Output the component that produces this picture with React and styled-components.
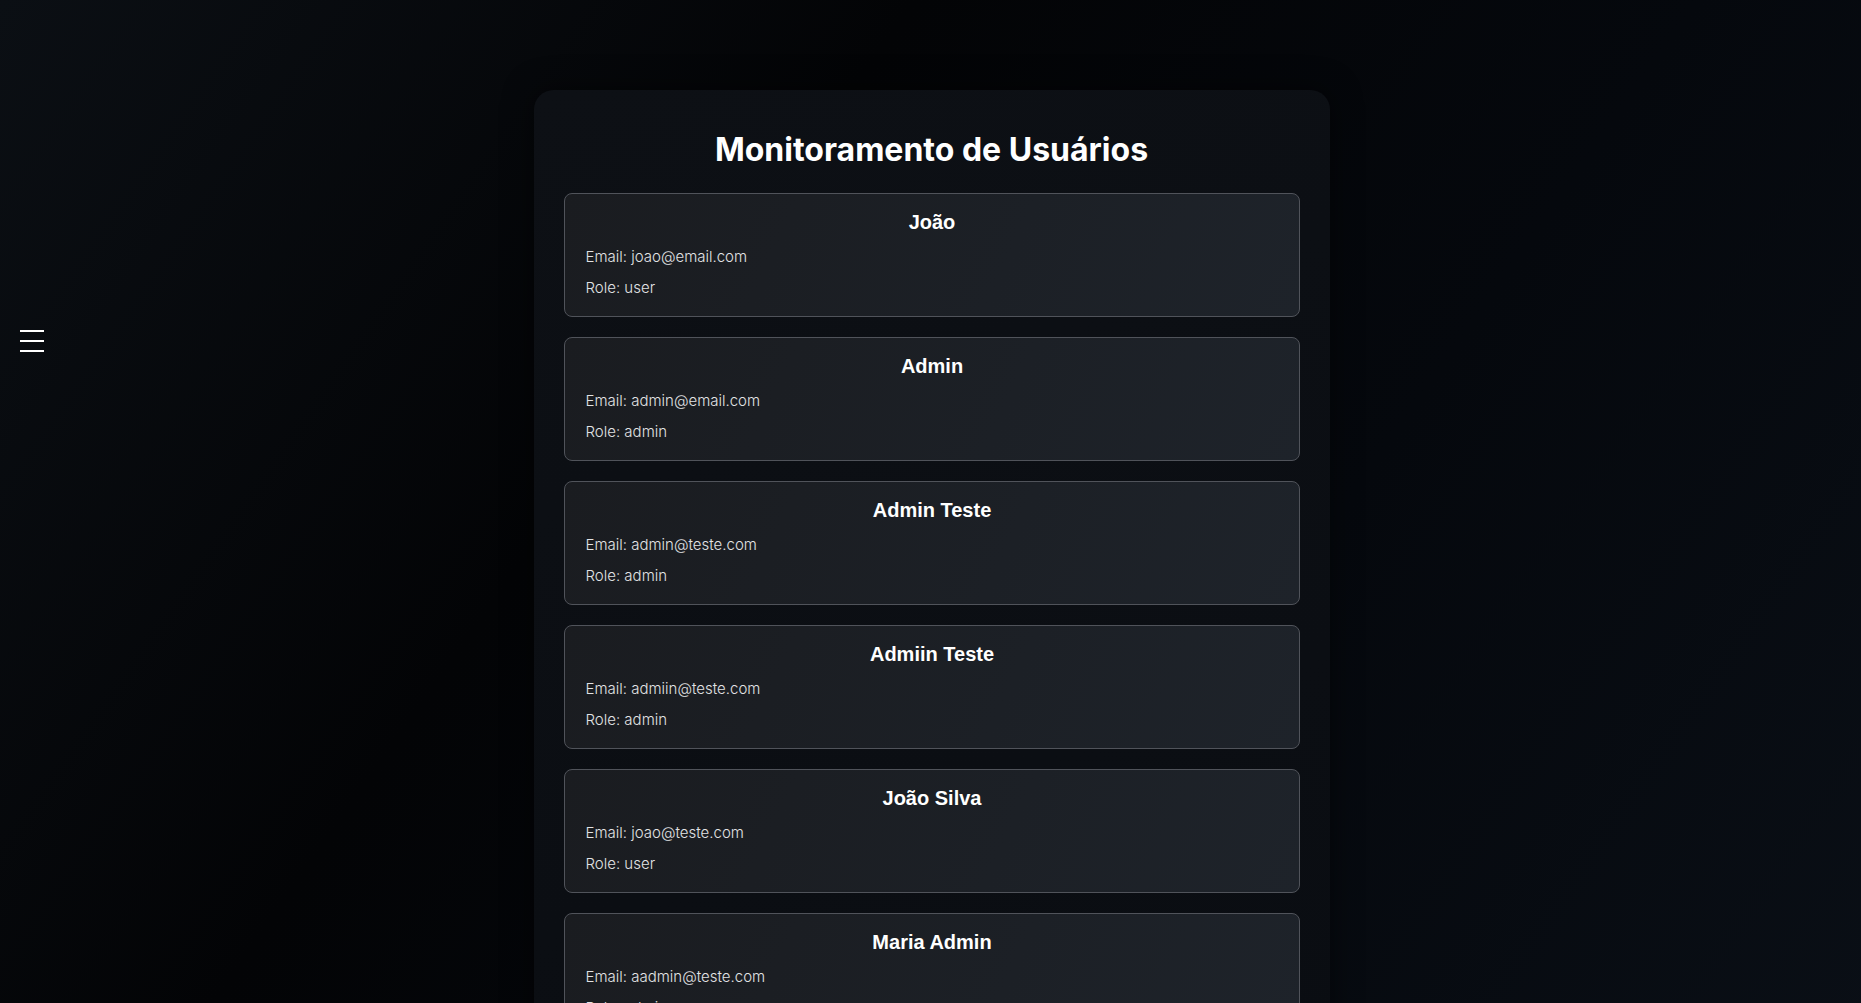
import React from 'react';
import styled, { createGlobalStyle } from 'styled-components';

const users = [
  { id: 1, name: "João", email: "joao@email.com", role: "user" },
  { id: 2, name: "Admin", email: "admin@email.com", role: "admin" },
  { id: 3, name: "Admin Teste", email: "admin@teste.com", role: "admin" },
  { id: 4, name: "Admiin Teste", email: "admiin@teste.com", role: "admin" },
  { id: 5, name: "João Silva", email: "joao@teste.com", role: "user" },
  { id: 6, name: "Maria Admin", email: "aadmin@teste.com", role: "admin" },
];

const GlobalStyle = createGlobalStyle`
  * { box-sizing: border-box; }
  html, body {
    margin: 0;
    padding: 0;
    background: #05070a;
  }
  body {
    font-family: Inter, "Noto Sans", sans-serif;
    color: #fff;
  }
`;

const Page = styled.div`
  min-height: 100vh;
  background: linear-gradient(125deg, #0b0f14 0%, #030406 35%, #05080d 65%, #0a0f16 100%);
  display: flex;
  justify-content: center;
  padding-top: 90px;
  padding-left: 2px;
`;

const MenuButton = styled.button`
  position: fixed;
  left: 20px;
  top: 330px;
  width: 24px;
  height: 22px;
  padding: 0;
  border: none;
  background: transparent;
  display: flex;
  flex-direction: column;
  justify-content: space-between;
  cursor: pointer;
`;

const MenuLine = styled.span`
  display: block;
  width: 24px;
  height: 2px;
  background: #fff;
`;

const Panel = styled.main`
  width: 796px;
  padding: 40px 30px 40px;
  border-radius: 20px;
  background: linear-gradient(160deg, #0d1015 0%, #0a0d12 100%);
  box-shadow: 0 0 30px rgba(0, 0, 0, 0.5);
`;

const Title = styled.h1`
  margin: 0 0 24px;
  text-align: center;
  font-family: Inter, sans-serif;
  font-size: 32px;
  line-height: 39px;
  font-weight: 700;
  color: #fff;
`;

const List = styled.div`
  display: flex;
  flex-direction: column;
  gap: 20px;
`;

const Card = styled.div`
  border: 1px solid #50535a;
  border-radius: 8px;
  padding: 16px 20px 18px 21px;
  background: linear-gradient(115deg, #1a1c20 0%, #1c2026 60%, #1e232a 100%);
`;

const Name = styled.h3`
  margin: 0 0 13px;
  text-align: center;
  font-family: "Liberation Sans", Arial, sans-serif;
  font-size: 20px;
  line-height: 24px;
  font-weight: 700;
  color: #fff;
`;

const Info = styled.p`
  margin: 0;
  font-family: Inter, sans-serif;
  font-size: 15px;
  line-height: 20px;
  font-weight: 300;
  color: #e2e3e5;

  & + & {
    margin-top: 11px;
  }
`;

function App() {
  return (
    <>
      <GlobalStyle />
      <Page>
        <MenuButton aria-label="menu">
          <MenuLine />
          <MenuLine />
          <MenuLine />
        </MenuButton>
        <Panel>
          <Title>Monitoramento de Usuários</Title>
          <List>
            {users.map((user) => (
              <Card key={user.id}>
                <Name>{user.name}</Name>
                <Info>Email: {user.email}</Info>
                <Info>Role: {user.role}</Info>
              </Card>
            ))}
          </List>
        </Panel>
      </Page>
    </>
  );
}

export default App;
